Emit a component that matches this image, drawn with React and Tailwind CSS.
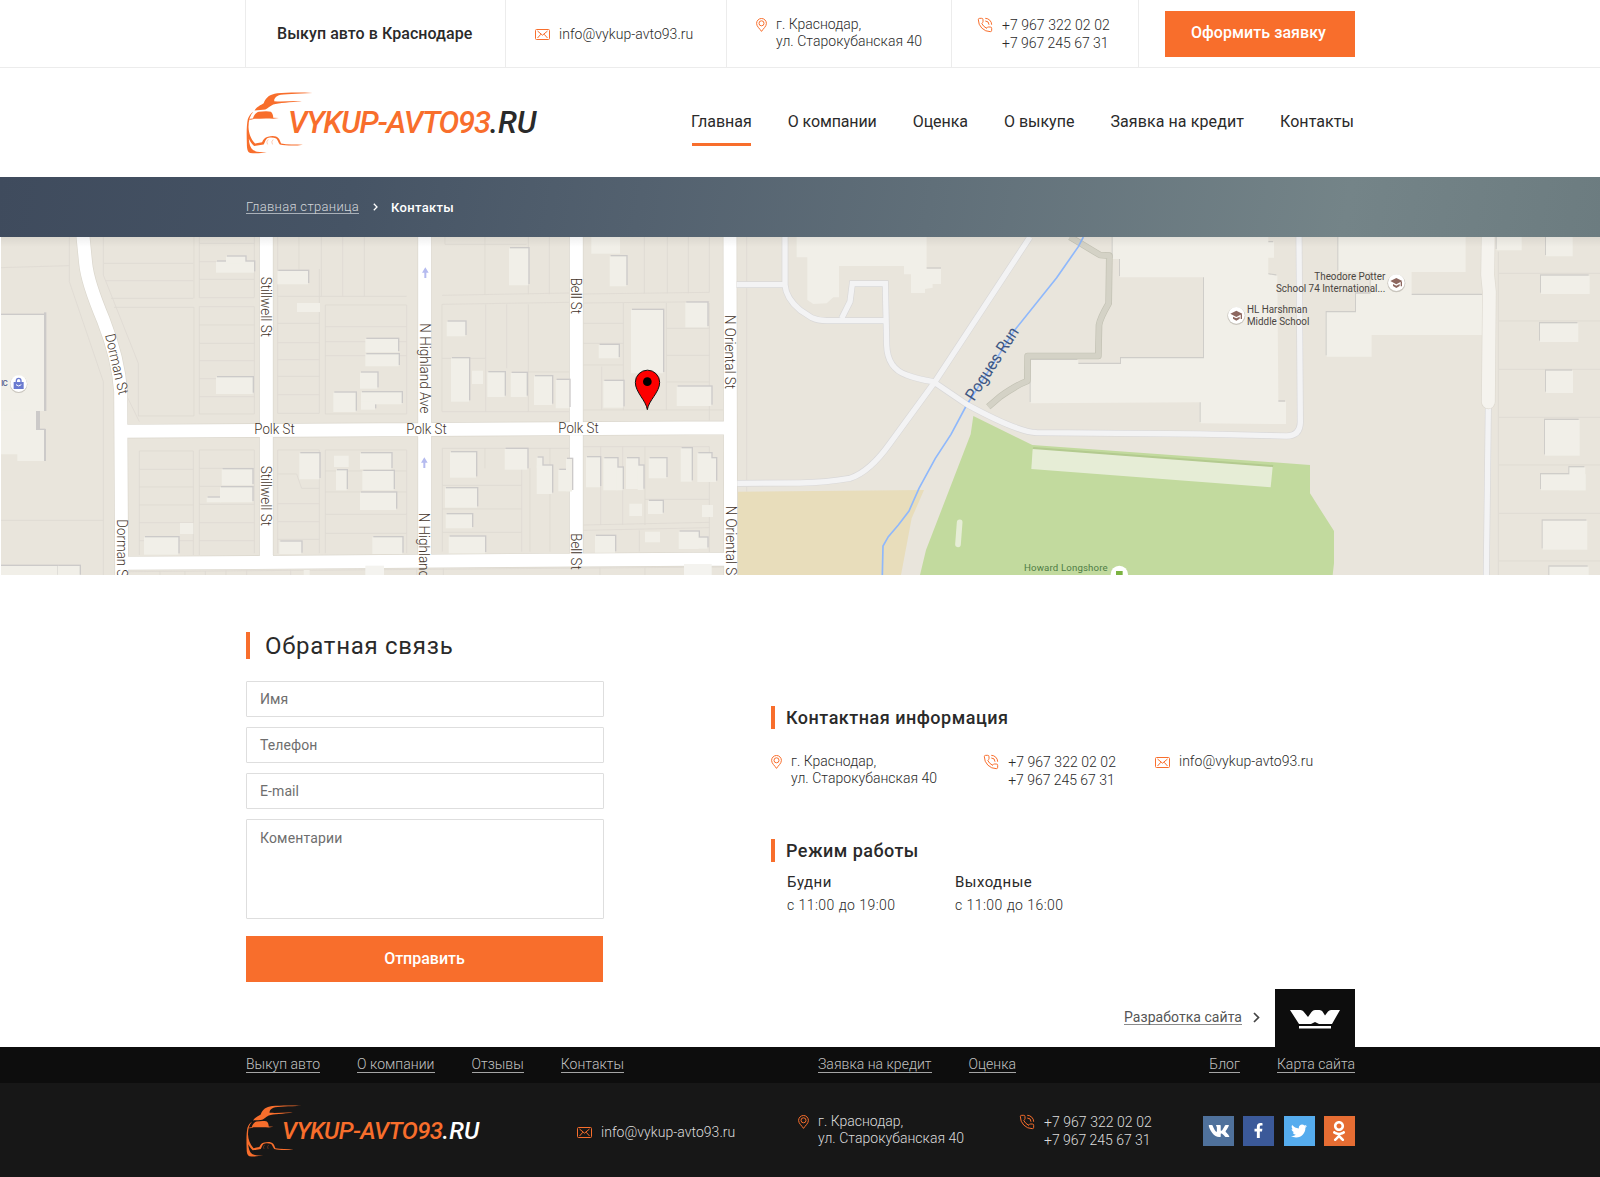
import React from "react";
import { PhoneCall } from "lucide-react";
import { FaVk, FaFacebookF, FaTwitter, FaOdnoklassniki } from "react-icons/fa";

function T({ className = "", children }) {
  return <span className={"inline-block whitespace-nowrap " + className}>{children}</span>;
}

const PinIcon = () => (
  <svg width="11" height="14" viewBox="0 0 11 14" fill="none" stroke="#f86e2c" strokeWidth="1" className="shrink-0">
    <path d="M5.5 13.4C4 10.8.6 8.600.6 5.400a4.900 4.900 0 0 1 9.800 0C10.400 8.600 7 10.800 5.500 13.400Z" />
    <circle cx="5.500" cy="5.300" r="2.500" />
  </svg>
);

const MailIcon = () => (
  <svg width="15" height="11" viewBox="0 0 15 11" fill="none" stroke="#f86e2c" strokeWidth="1" className="shrink-0">
    <rect x=".5" y=".5" width="14" height="10" rx="1" />
    <path d="M2.500 2 7.500 6.200l5-4.200M2.500 9 5.900 5.200M12.500 9 9.100 5.200" />
  </svg>
);

const PhoneIcon = () => <PhoneCall size={16} strokeWidth={1.5} color="#f86e2c" className="-ml-px shrink-0" />;

const Mail = ({ textClass = "-mt-px" }) => (
  <div className="flex items-center gap-[9px]">
    <MailIcon />
    <T className={"tracking-[0.04px] " + textClass}>info@vykup-avto93.ru</T>
  </div>
);

const Address = () => (
  <div className="flex gap-[9px]">
    <div className="pt-[2px]"><PinIcon /></div>
    <div className="flex flex-col items-start leading-[17px] tracking-[0.04px]">
      <T className="tracking-normal">г. Краснодар,</T>
      <T>ул. Старокубанская 40</T>
    </div>
  </div>
);

const Phones = () => (
  <div className="flex gap-[9px]">
    <div className="pt-px"><PhoneIcon /></div>
    <div className="flex flex-col items-start leading-[18px]">
      <T className="tracking-[0.05px]">+7 967 322 02 02</T>
      <T className="-tracking-[0.03px]">+7 967 245 67 31</T>
    </div>
  </div>
);

const CarMark = ({ className }) => (
  <svg viewBox="47 274 200 188" className={className} fill="#f86e2c">
    <path d="M71 330C78 318 90 314 99 308 106 290 118 281 140 278 170 275 215 275 247 277 200 279 160 280 145 284 134 289 130 295 131 302 160 304 190 300 215 302 180 305 145 307 128 312 116 318 112 324 104 327 95 329 82 328 71 330Z" />
    <path d="M66 355C70 343 76 336 84 334 98 332 112 331 121 334 126 338 128 346 128 352L145 353 128 355C105 353 85 355 66 355Z" />
    <path d="M68 334C58 344 53 360 53 380 54 400 60 416 73 430L94 426C98 418 102 412 112 410 124 406 138 407 144 414 148 419 150 426 152 430 170 434 195 432 218 434 195 438 165 437 148 433 143 427 142 420 137 415 128 411 115 411 109 415 103 420 103 428 99 433L70 438C62 430 58 424 54 416 55 430 58 444 68 451 80 457 92 456 108 457 92 460 72 461 58 459 50 456 48 446 48 430 47 400 47 375 51 356 55 346 60 339 68 334Z" />
    <path d="M52 357C60 354 66 354 72 355L60 358Z" />
    <path d="M113 418q-8 7-2 15M128 418q-8 7-2 15" fill="none" stroke="#f86e2c" strokeWidth="2" opacity=".55" />
  </svg>
);

const P = (a) => a.map((p) => p.join(",")).join(" ");

const parcels = [
  "M0 98 208 92M208 6V140L310 440V1020M0 856H310M340 400 418 560M310 6V120L415 385V543H582V217H342M312 85H580M318 137H580M333 190H580M582 6V190",
  "M598 6V188H763M598 25H763M598 80H763M598 133H763M598 215H763V537H598ZM598 270H763M598 325H763M598 377H763M598 431H763M598 485H763M763 6V188",
  "M833 6V184H1220M897 6V104M964 6V184M1028 6V184M1093 6V184M833 184V535H958V102M833 265H958M833 323H958M833 374H958M833 424H958M833 479H958M976 210H1220M976 210V537H1220M976 275H1220M976 320H1220M976 362H1220",
  "M418 648H580V960M418 648V960M418 703H580M418 756H580M418 810H580M418 863H580M418 917H580M598 645H763V955M598 645V960M598 700H763M598 754H763M598 808H763M598 863H763M598 917H763",
  "M833 645H958V955M833 645V955M833 717H890L905 760H958M833 806H958M833 860H958M833 913H958M976 645H1220V955M976 645V955M976 708H1220M976 771H1220M976 838H1220M976 895H1220M1220 210V537",
  "M1335 28H1580M1335 6V28M1455 6V178M1585 6V178M1648 6V178M1326 181 1708 174M1326 208 1708 202M1326 208V530H1708M1457 208V530M1520 208V400M1585 208V530M1326 370H1456M1585 411H1708",
  "M1750 177 2128 172M1750 204 2128 200M1933 6V175M2002 6V175M2065 6V175M2128 6V172M1870 204V525H1750M1999 204V525M2128 204V557M1750 265H1870M1750 325H1870M1750 390H1870M2000 280H2128M2000 361H2128M2000 441H2128M1805 395V525M1870 525H2170",
  "M1327 640H1708M1327 640V950M1455 640V700M1565 640V950M1590 700V950M1650 640V950M1327 751H1565M1327 822H1565M1327 892H1565M1750 635H2128M1802 635V870M1868 635V870M1935 635V870M2128 635V955M1935 793H2128M1750 870 2128 862M1750 886 2128 878M1918 886V950",
  "M2240 6V140M2240 160V735M2240 755V770M387 1010 2170 996M480 1008V1020M555 1008V1020M616 1008V1020M678 1006V1020M740 1005V1020M872 1004V1020M1250 1000V1020M1330 1000V1020M1800 998V1020M1935 998V1020",
  "M4495 50V1020M4497 115H4800M4497 258H4800M4497 403H4800M4497 547H4800M4497 690H4800M4497 835H4800M4497 978H4800",
].join("");

const buildings = [
  [0, 240, 132, 288], [0, 527, 108, 60], [0, 585, 132, 73], [52, 640, 80, 38], [0, 993, 172, 30], [173, 993, 66, 30],
  [648, 80, 114, 33], [678, 65, 58, 20], [648, 427, 110, 50], [832, 108, 92, 40], [1096, 312, 98, 40], [1096, 358, 100, 36],
  [1080, 413, 52, 48], [1000, 473, 67, 58], [1083, 472, 122, 36], [1083, 500, 42, 24], [898, 655, 60, 78], [1008, 706, 32, 60],
  [1080, 655, 94, 48], [1087, 708, 94, 58], [1080, 773, 108, 52], [665, 703, 92, 48], [660, 757, 97, 45], [620, 788, 42, 14],
  [432, 907, 103, 52], [838, 920, 66, 37], [1117, 907, 90, 50],
  [1527, 40, 58, 111], [1829, 64, 50, 90], [1340, 260, 56, 44], [1353, 370, 54, 130], [1462, 412, 52, 74], [1532, 414, 48, 72],
  [1602, 424, 54, 86], [1667, 435, 41, 85], [1796, 330, 60, 40], [1810, 438, 60, 80], [1893, 225, 96, 190], [2056, 203, 66, 74],
  [2030, 455, 104, 58], [1350, 652, 78, 76], [1335, 760, 96, 58], [1337, 838, 79, 42], [1346, 905, 109, 50], [1514, 642, 68, 62],
  [1610, 668, 17, 30], [1610, 692, 46, 85], [1675, 705, 40, 64], [1698, 672, 18, 97], [1758, 667, 42, 90], [1810, 670, 42, 96],
  [1850, 698, 18, 68], [1878, 670, 37, 92], [1913, 692, 17, 73], [1946, 670, 53, 60], [2042, 640, 33, 100], [2092, 655, 42, 86],
  [2132, 670, 16, 71], [1944, 798, 44, 39], [1785, 903, 60, 50], [2036, 890, 60, 52], [2094, 908, 28, 33],
];
const flat = [
  [891, 204, 69, 27], [1002, 662, 44, 34], [540, 864, 40, 33], [1416, 407, 33, 40], [1888, 806, 38, 37], [2106, 810, 33, 36],
  [1935, 890, 45, 32], [911, 1005, 18, 18], [1774, 6, 86, 50],
];
const eastern = [
  [4490, 6, 75, 40], [4638, 6, 80, 58], [4623, 122, 146, 55], [4620, 265, 115, 56], [4638, 407, 81, 67], [4635, 555, 104, 107],
  [4623, 718, 134, 48], [4708, 697, 48, 69], [4628, 857, 134, 87], [4648, 995, 118, 30],
];

const minorRoads =
  "M2210 149H2350M2355 6V150Q2358 190 2400 225L2435 248Q2455 257 2480 257H2655M2525 250 2550 200 2557 146H2656L2660 330Q2662 400 2720 420 2750 432 2800 440L2900 508Q3050 590 3110 593L3600 597 3860 603Q3900 602 3901 562L3897 6M3090 6 2805 440 2670 625Q2610 710 2550 730 2480 742 2400 744L2212 745M4465 515 4459 1020";
const greyPath = "M3210 6 3300 60 3328 62 3326 205Q3300 250 3297 270L3295 363H3083L3082 438Q3050 450 3000 485L2965 515";
const mainRoads =
  "M799 6V985M1274 6V985M1729 6V985M2190 6 2192 1020M365 589 2190 578M365 985 2190 972M248 -5 257 85Q262 140 310 255 355 370 362 470L365 1020";

const streetLabels = [
  ["Stillwell St", 783, 125, 90, 181], ["Stillwell St", 783, 692, 90, 181], ["Dorman St", 315, 300, 77, 186], ["Dorman St", 350, 853, 90, 186],
  ["N Highland Ave", 1259, 265, 90, 270], ["N Highland Ave", 1257, 833, 90, 270], ["Bell St", 1714, 128, 90, 109], ["Bell St", 1714, 895, 90, 109],
  ["N Oriental St", 2174, 240, 90, 222], ["N Oriental St", 2178, 812, 90, 222], ["Polk St", 763, 597, 0, 121], ["Polk St", 1219, 596, 0, 121],
  ["Polk St", 1675, 595, 0, 121],
];

function SchoolPin({ x, y }) {
  return (
    <g transform={`translate(${x} ${y})`}>
      <circle r="27" cy="2" fill="#c9c5bd" />
      <circle r="25" fill="#fff" />
      <path d="M-18-5 0-14 18-5 0 5ZM-10 4 0 9 10 4V10L0 16-10 10ZM13-3h4v14h-4Z" fill="#8d675f" />
    </g>
  );
}

function CityMap() {
  return (
    <svg viewBox="3 6 4797 1014" preserveAspectRatio="none" className="ml-px block h-[338px] w-[1599px] font-normal" fontFamily="Roboto, sans-serif">
      <defs>
        <linearGradient id="mapTop" x1="0" y1="0" x2="0" y2="1">
          <stop offset="0" stopColor="#000" stopOpacity=".06" />
          <stop offset="1" stopColor="#000" stopOpacity="0" />
        </linearGradient>
      </defs>
      <rect x="0" y="0" width="4800" height="1030" fill="#e9e5dc" />
      <path d={parcels} fill="none" stroke="#dedad2" strokeWidth="2.500" />
      <polygon fill="#e8ddbb" points={P([[2214, 770], [2772, 765], [2735, 850], [2703, 1020], [2214, 1020]])} />
      <polygon fill="#c2da9e" points={P([[2920, 543], [3097, 630], [3930, 690], [3930, 775], [4002, 888], [4002, 985], [3998, 1020], [2760, 1020], [2778, 945], [2912, 598]])} />
      <polygon fill="#b3ca8f" points={P([[3100, 636], [3820, 690], [3818, 698], [3098, 644]])} />
      <polygon fill="#e6edd6" points={P([[3098, 642], [3818, 696], [3812, 757], [3094, 702]])} />
      <path d="M2879 862 2874 928" stroke="#e6edd6" strokeWidth="17" strokeLinecap="round" />
      {[["#cfcdc9", -3, -4], ["#f1efe8", 0, 0]].map(([c, x, y]) => (
        <g key={c} fill={c} transform={`translate(${x} ${y})`}>
          <polygon points={P([[3338, 0], [3805, 0], [3805, 22], [3822, 22], [3822, 68], [3805, 68], [3805, 118], [3832, 122], [3835, 500], [3858, 500], [3858, 567], [3602, 565], [3602, 502], [3092, 505], [3092, 375], [3235, 375], [3235, 387], [3363, 387], [3363, 370], [3612, 370], [3612, 127], [3360, 127], [3360, 72], [3338, 72]])} />
          <polygon points={P([[4015, 0], [4397, 0], [4397, 111], [4235, 111], [4235, 180], [4450, 180], [4450, 300], [4115, 300], [4115, 365], [3980, 365], [3980, 232], [4068, 232], [4068, 176], [4112, 176], [4112, 111], [4015, 111]])} />
          {eastern.map(([a, b, w, h]) => <rect key={a + "-" + b} x={a} y={b} width={w} height={h} />)}
        </g>
      ))}
      <polygon fill="#f1efe8" points={P([[2390, 0], [2780, 0], [2780, 100], [2823, 100], [2823, 147], [2798, 147], [2798, 158], [2775, 162], [2775, 174], [2733, 174], [2733, 118], [2712, 118], [2712, 93], [2517, 93], [2517, 187], [2500, 187], [2480, 205], [2440, 207], [2422, 195], [2422, 67], [2390, 67]])} />
      <path d="M2780 99H2823" stroke="#cfcdc9" strokeWidth="4" />
      <path d={greyPath} fill="none" stroke="#c2c1b3" strokeWidth="20" strokeLinejoin="round" />
      <path d={greyPath} fill="none" stroke="#d4d2c6" strokeWidth="16" strokeLinejoin="round" />
      <path d={mainRoads} fill="none" stroke="#dbd7cd" strokeWidth="43" />
      <path d={mainRoads} fill="none" stroke="#fff" strokeWidth="39" />
      <g fill="#cccac9">
        {buildings.map(([a, b, w, h]) => <rect key={a + "-" + b} x={a + 3} y={b - 4} width={w + 1} height={h} />)}
        <rect x="132" y="232" width="7" height="296" />
        <rect x="132" y="582" width="6" height="96" />
        <rect x="108" y="528" width="12" height="54" />
      </g>
      <g fill="#f1efe8">
        {buildings.map(([a, b, w, h]) => <rect key={a + "-" + b} x={a} y={b} width={w} height={h} />)}
        {flat.map(([a, b, w, h]) => <rect key={a + "-" + b} x={a} y={b} width={w} height={h} />)}
      </g>
      <rect x="1096" y="992" width="56" height="28" fill="#f4f3ef" />
      <rect x="2052" y="987" width="83" height="33" fill="#f4f3ef" />
      <path d={minorRoads} fill="none" stroke="#d9d8d8" strokeWidth="20" />
      <path d="M3250 6 3235 35 3170 128 3042 288 2990 370 2900 510 2853 598 2806 670 2757 760 2727 828 2695 870 2665 905 2649 933 2647 1020" fill="none" stroke="#8fb8fb" strokeWidth="5" />
      <path d={minorRoads} fill="none" stroke="#f3f3f4" strokeWidth="16" />
      <path d="M4465-20 4463 120 4468 170 4465 501" fill="none" stroke="#dedad1" strokeWidth="43" strokeLinecap="round" strokeLinejoin="round" />
      <path d="M4465-20 4463 120 4468 170 4465 501" fill="none" stroke="#f5f3ee" strokeWidth="39" strokeLinecap="round" strokeLinejoin="round" />
      <rect x="0" y="6" width="4800" height="30" fill="url(#mapTop)" />

      <g fontSize="43" fontWeight="300" fill="#43352b">
        {streetLabels.map(([s, x, y, r, w], i) => (
          <text key={i} transform={`translate(${x} ${y}) rotate(${r})`} textLength={w} lengthAdjust="spacingAndGlyphs">{s}</text>
        ))}
      </g>
      <text transform="translate(2922 500) rotate(-57)" fontSize="50" fill="#3f5783" textLength="250" lengthAdjust="spacingAndGlyphs">Pogues Run</text>
      {[[1276, 113], [1273, 683]].map(([x, y]) => (
        <path key={y} d={`M${x - 3} ${y + 16}V${y}h-7L${x} ${y - 16} ${x + 10} ${y}h-7V${y + 16}Z`} fill="#b5bbef" />
      ))}
      <g fontSize="30.500" fill="#4a4541">
        <text x="3943" y="136" textLength="213" lengthAdjust="spacingAndGlyphs">Theodore Potter</text>
        <text x="3828" y="172" textLength="328" lengthAdjust="spacingAndGlyphs">School 74 International...</text>
        <text x="3741" y="235" textLength="181" lengthAdjust="spacingAndGlyphs">HL Harshman</text>
        <text x="3741" y="271" textLength="187" lengthAdjust="spacingAndGlyphs">Middle School</text>
      </g>
      <SchoolPin x={4189} y={143} />
      <SchoolPin x={3709} y={241} />
      <text x="3072" y="1008" fontSize="29" fill="#4e7d45" textLength="251">Howard Longshore</text>
      <circle cx="3358" cy="1018" r="26" fill="#fff" />
      <rect x="3348" y="1008" width="20" height="14" fill="#7cb342" />
      <text x="3" y="454" fontSize="30" fill="#54608c" textLength="20">ıc</text>
      <circle cx="56" cy="448" r="26" fill="#c9c5bd" />
      <circle cx="56" cy="446" r="25" fill="#fff" />
      <path d="M41 441h30v21h-30Z" fill="#6b7bd0" />
      <path d="M49 441v-4a7 7 0 0 1 14 0v4" fill="none" stroke="#6b7bd0" strokeWidth="4" />
      <path d="M48 449q8 8 16 0" fill="none" stroke="#fff" strokeWidth="3" />
      <path d="M1942 524C1938 496 1906 472 1906 442a36.500 36.500 0 0 1 73 0C1979 472 1946 496 1942 524Z" fill="#fe0000" stroke="#111" strokeWidth="3" />
      <circle cx="1942" cy="440" r="13" fill="#000" />
    </svg>
  );
}

const Field = ({ label }) => (
  <div className="flex h-9 w-[358px] items-center rounded-[1px] border border-[#dedede] pl-[13px] text-[14px] tracking-[0.1px] text-[#6e6e6e]">
    <T>{label}</T>
  </div>
);

const FootLink = ({ children }) => (
  <a className="border-b border-[#a5a5a5] leading-[15px] tracking-[0.03px] text-[#c2c2c2]">
    <T className="block">{children}</T>
  </a>
);

export default function App() {
  return (
    <div className="h-[1177px] w-[1600px] overflow-hidden bg-white font-['Roboto',sans-serif] text-[14px] font-light text-[#2a2a2a]">
      <div className="h-[68px] border-b border-[#ececec]">
        <div className="mx-auto flex h-[67px] w-[1110px]">
          <div className="flex w-[260px] items-center border-l border-[#ececec] pl-[31px] text-[16px] font-medium tracking-[0.06px]">
            <T>Выкуп авто в Краснодаре</T>
          </div>
          <div className="flex w-[221px] items-center border-l border-[#ececec] pl-[29px] pt-[2px]"><Mail /></div>
          <div className="w-[225px] border-l border-[#ececec] pl-[29px] pt-4"><Address /></div>
          <div className="w-[187px] border-l border-[#ececec] pl-[26px] pt-4"><Phones /></div>
          <div className="flex flex-1 justify-end border-l border-[#ececec] pt-[11px]">
            <button className="h-[46px] w-[190px] bg-[#f86e2c] pb-[2px] pr-[3px] text-[16px] font-medium text-white">
              <T className="tracking-[0.06px]">Оформить заявку</T>
            </button>
          </div>
        </div>
      </div>

      <div className="mx-auto flex h-[109px] w-[1110px] justify-between">
        <div className="flex pl-px pt-6">
          <CarMark className="h-[62px] w-[67px]" />
          <div className="-ml-[25px] flex pt-[13px] text-[31px] font-medium italic leading-[36px]">
            <T className="tracking-[-1.25px] text-[#f86e2c]">VYKUP-AVTO93</T>
            <T className="tracking-[-0.2px]">.RU</T>
          </div>
        </div>
        <nav className="flex gap-9 pr-[1px] pt-[43px] text-[16px] font-normal leading-[22px]">
          <div>
            <T>Главная</T>
            <div className="ml-px mt-[10px] h-[3px] w-[59px] bg-[#f86e2c]" />
          </div>
          <T className="-tracking-[0.12px]">О компании</T>
          <T className="-tracking-[0.06px]">Оценка</T>
          <T>О выкупе</T>
          <T className="tracking-[0.1px]">Заявка на кредит</T>
          <T className="tracking-[0.06px]">Контакты</T>
        </nav>
      </div>

      <div className="h-[60px] bg-[linear-gradient(100deg,#3f4b5d_0%,#465465_22%,#53616f_40%,#606f79_58%,#748488_84%,#6c7c80_100%)]">
        <div className="mx-auto flex h-[60px] w-[1110px] items-center pl-px text-[13px]">
          <T className="border-b border-[#aab1b9] leading-[13px] tracking-[0.33px] text-[#d3d6da]">Главная страница</T>
          <svg width="5" height="8" viewBox="0 0 5 8" className="ml-[14px]" fill="none" stroke="#fff" strokeWidth="1.300"><path d="M.8.800 4 4 .8 7.200" /></svg>
          <T className="ml-[13px] mt-px font-medium tracking-[0.3px] text-white">Контакты</T>
        </div>
      </div>

      <CityMap />

      <div className="mx-auto flex h-[414px] w-[1110px] pl-px">
        <div className="w-[358px] pt-[57px]">
          <div className="flex h-[27px] items-center border-l-4 border-[#f86e2c] pl-[15px] text-[24px] font-normal tracking-[0.73px]">
            <T>Обратная связь</T>
          </div>
          <div className="mt-[22px] flex flex-col gap-[10px] font-normal">
            <Field label="Имя" />
            <Field label="Телефон" />
            <Field label="E-mail" />
            <div className="h-[100px] w-[358px] rounded-[1px] border border-[#dedede] pl-[13px] pt-[8px] text-[14px] leading-[20px] tracking-[0.15px] text-[#6e6e6e]">
              <T>Коментарии</T>
            </div>
          </div>
          <button className="mt-[17px] h-[46px] w-[357px] bg-[#f86e2c] text-[16px] font-medium text-white">
            <T>Отправить</T>
          </button>
        </div>

        <div className="ml-[167px] flex-1 pt-[131px]">
          <div className="flex h-[23px] items-center border-l-4 border-[#f86e2c] pl-[11px] text-[18px] font-medium tracking-[0.5px]">
            <T>Контактная информация</T>
          </div>
          <div className="mt-6 flex items-start">
            <Address />
            <div className="ml-[47px]"><Phones /></div>
            <div className="-mt-px ml-[39px]"><Mail /></div>
          </div>
          <div className="mt-[50px] flex h-[23px] items-center border-l-4 border-[#f86e2c] pl-[11px] text-[18px] font-medium tracking-[0.45px]">
            <T>Режим работы</T>
          </div>
          <div className="mt-[10px] flex pl-4 tracking-[0.45px]">
            <div className="flex w-[168px] flex-col items-start gap-1">
              <T className="text-[15px] font-normal leading-[20px]">Будни</T>
              <T className="leading-[18px]">с 11:00 до 19:00</T>
            </div>
            <div className="flex flex-col items-start gap-1">
              <T className="text-[15px] font-normal leading-[20px]">Выходные</T>
              <T className="leading-[18px]">с 11:00 до 16:00</T>
            </div>
          </div>
        </div>
      </div>

      <div className="mx-auto flex h-[58px] w-[1110px] items-center justify-end">
        <T className="-mt-px border-b border-[#8a8a8a] font-normal leading-[14px] tracking-[0.05px] text-[#555]">Разработка сайта</T>
        <svg width="7" height="11" viewBox="0 0 7 11" className="-mt-px ml-[11px] mr-px" fill="none" stroke="#444" strokeWidth="1.700"><path d="M1 1 5.500 5.500 1 10" /></svg>
        <div className="ml-[14px] h-[58px] w-20 bg-[#0d0d0d] pl-[15px] pt-[21px]">
          <svg width="50" height="19" viewBox="0 0 50 19" fill="#fff">
            <path d="M0 0H10.500Q12.500 0 13.500 1.500L18 7 21.500 2Q23 0 25 0H29.500Q31.500 0 32.500 1.500L35 5.500 38 1.500Q39.200 0 41 0H50L42 14H29L25 12 21 14H9Z" />
            <rect x="9" y="16" width="32" height="2.500" />
          </svg>
        </div>
      </div>

      <footer className="bg-[#171717] text-[#dcdcdc]">
        <div className="h-9 bg-[#0d0d0d]">
          <div className="mx-auto flex w-[1110px] items-start pl-px pt-[10px]">
            <div className="flex w-[572px] gap-[37px]">
              <FootLink>Выкуп авто</FootLink>
              <FootLink>О компании</FootLink>
              <FootLink>Отзывы</FootLink>
              <FootLink>Контакты</FootLink>
            </div>
            <div className="flex flex-1 gap-[37px]">
              <FootLink>Заявка на кредит</FootLink>
              <FootLink>Оценка</FootLink>
            </div>
            <div className="flex gap-[37px]">
              <FootLink>Блог</FootLink>
              <FootLink>Карта сайта</FootLink>
            </div>
          </div>
        </div>
        <div className="mx-auto flex h-[94px] w-[1110px] items-start pl-px">
          <div className="flex w-[331px] pt-[22px]">
            <CarMark className="h-[52px] w-[56px]" />
            <div className="-ml-[20px] flex pt-[11px] text-[24px] font-medium italic leading-[30px]">
              <T className="tracking-[-0.62px] text-[#f86e2c]">VYKUP-AVTO93</T>
              <T className="tracking-[0.3px] text-white">.RU</T>
            </div>
          </div>
          <div className="w-[221px] pt-[38px]"><Mail textClass="mt-px" /></div>
          <div className="w-[222px] pt-[30px]"><Address /></div>
          <div className="w-[183px] pt-[30px]"><Phones /></div>
          <div className="flex flex-1 justify-between pt-[33px] text-white">
            <div className="flex h-[30px] w-[31px] items-center justify-center bg-[#4f719b]"><FaVk size={22} /></div>
            <div className="flex h-[30px] w-[31px] items-center justify-center bg-[#3b5999] pb-px"><FaFacebookF size={15} /></div>
            <div className="flex h-[30px] w-[31px] items-center justify-center bg-[#55acee]"><FaTwitter size={16} /></div>
            <div className="flex h-[30px] w-[31px] items-center justify-center bg-[#e66d33]"><FaOdnoklassniki size={20} /></div>
          </div>
        </div>
      </footer>
    </div>
  );
}
